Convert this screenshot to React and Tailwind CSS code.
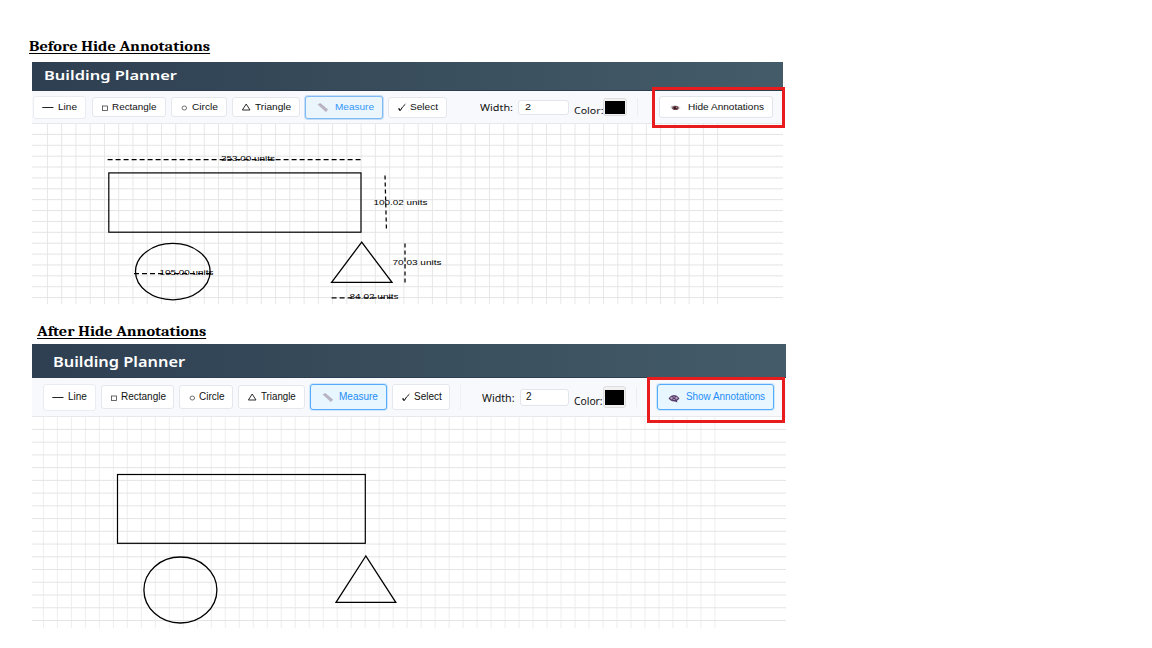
import React, { useLayoutEffect, useRef, useState } from "react";

const SANS = "font-['Liberation_Sans',sans-serif]";
const HUMANIST = "font-['Noto_Sans',sans-serif]";

// Single line of text stretched horizontally to a given width.
function FitText({ width, className = "", children }) {
  const ref = useRef(null);
  const [scale, setScale] = useState(1);
  useLayoutEffect(() => {
    setScale(width / ref.current.offsetWidth);
  }, [width]);
  return (
    <span className="inline-flex shrink-0 whitespace-nowrap" style={{ width }}>
      <span className="inline-flex origin-left" style={{ transform: `scaleX(${scale})` }}>
        <span ref={ref} className={className}>{children}</span>
      </span>
    </span>
  );
}

const LineIcon = () => (
  <svg className="h-3 w-3 shrink-0" viewBox="0 0 12 12"><path d="M0.3 6.5H11.5" stroke="#222" strokeWidth="1" /></svg>
);
const RectIcon = () => (
  <svg className="h-3 w-2 shrink-0" viewBox="0 0 8 12"><rect x="2.5" y="5" width="5" height="4.5" fill="none" stroke="#444" strokeWidth="0.8" /></svg>
);
const CircleIcon = () => (
  <svg className="h-3 w-2 shrink-0" viewBox="0 0 8 12"><ellipse cx="4.3" cy="7" rx="2.3" ry="2" fill="none" stroke="#444" strokeWidth="0.75" /></svg>
);
const TriangleIcon = () => (
  <svg className="h-3 w-2.5 shrink-0" viewBox="0 0 10 12"><path d="M1.4 9L5.2 3L9 9Z" fill="none" stroke="#222" strokeWidth="0.95" /></svg>
);
const RulerIcon = () => (
  <svg className="h-3 w-3 shrink-0" viewBox="0 0 12 12">
    <path d="M0.6 3.6L3.2 2L11.2 8.8L8.8 11Z" fill="#bbb5c4" />
    <path d="M3.3 3.9l0.8-0.8M5 5.3l0.8-0.8M6.7 6.8l0.8-0.8M8.4 8.3l0.8-0.8" stroke="#a097ab" strokeWidth="0.6" />
  </svg>
);
const CheckIcon = () => (
  <svg className="h-3 w-2.5 shrink-0" viewBox="0 0 10 12"><path d="M1.6 7.3L3.2 9.5" fill="none" stroke="#111" strokeWidth="1.4" /><path d="M3.2 9.7Q5.2 5.6 8.4 3.2" fill="none" stroke="#111" strokeWidth="1" /></svg>
);
const EyeIcon = () => (
  <svg className="h-3 w-3 shrink-0" viewBox="0 0 12 12">
    <path d="M0.8 7Q5.5 3.2 11.8 7.2Q6 10.4 0.8 7Z" fill="#d8cfd6" />
    <path d="M2 5.8Q6 3.6 10.3 6.2" fill="none" stroke="#9d929e" strokeWidth="0.8" />
    <ellipse cx="6.4" cy="7" rx="3.2" ry="2" fill="#6f4047" />
    <ellipse cx="6.2" cy="6.9" rx="1.5" ry="1.1" fill="#2b171c" />
    <circle cx="7.3" cy="6.4" r="0.5" fill="#cbb9bd" />
  </svg>
);
const EyeSpeechIcon = () => (
  <svg className="h-3 w-3 shrink-0" viewBox="0 0 12 12">
    <path d="M0.5 7.2Q6 0.8 11.5 7.2Q10.3 8.9 9 9.7L9.3 11.4L7.2 10.5Q3 10.8 0.5 7.2Z" fill="#553a68" />
    <path d="M2.2 7.2Q2.8 6.3 3.7 5.8Q3.3 7.3 4 8.6Q2.9 8.1 2.2 7.2ZM9.8 7.2Q9.2 6.3 8.3 5.8Q8.7 7.3 8 8.6Q9.1 8.1 9.8 7.2Z" fill="#e4dcec" />
    <circle cx="6" cy="7.2" r="1.5" fill="none" stroke="#b9aac6" strokeWidth="0.7" />
  </svg>
);

function Tool({ icon, label, width, className, text = "text-[#111]" }) {
  return (
    <div className={`flex shrink-0 items-center rounded-[3px] border ${className} ${text}`}>
      {icon}
      <FitText width={width} className={`${SANS} leading-3`}>{label}</FitText>
    </div>
  );
}

const range = (first, step, count) => Array.from({ length: count }, (_, i) => first + i * step);

function Grid({ w, h, xs, ys, vertical, horizontal }) {
  return (
    <g>
      {xs.map((x) => <path key={`v${x}`} d={`M${x} 0V${h}`} stroke={vertical} strokeWidth="1" />)}
      {ys.map((y) => <path key={`h${y}`} d={`M0 ${y}H${w}`} stroke={horizontal} strokeWidth="1" />)}
    </g>
  );
}

function Dimension({ d, x, y, width, label, dash = "5 3" }) {
  return (
    <g>
      <path d={d} fill="none" stroke="#000" strokeWidth="1.25" strokeDasharray={dash} />
      <text x={x} y={y} textLength={width} lengthAdjust="spacingAndGlyphs" className={`${SANS} text-[8px]`} fill="#000">{label}</text>
    </g>
  );
}

function BeforePanel() {
  return (
    <section className="relative ml-8 w-[751px]">
      <header className="flex h-[29px] items-center border-b border-[#2c3e50] bg-linear-to-r from-[#2e3f51] to-[#445c69] pl-3 text-white">
        <FitText width={133} className={`${HUMANIST} text-[12.5px] leading-4 font-semibold`}>Building Planner</FitText>
      </header>
      <div className="flex h-[33px] items-center border-b border-[#e6e8ec] bg-[#f8f9fc] text-[9px]">
        <Tool icon={<LineIcon />} label="Line" width={19} className="ml-px h-[23px] w-[53px] gap-1 border-[#e9ecf1] bg-white pl-2" />
        <Tool icon={<RectIcon />} label="Rectangle" width={45} className="ml-[6px] h-5 w-[74px] gap-1 border-[#e4e7ec] bg-white pl-[7px]" />
        <Tool icon={<CircleIcon />} label="Circle" width={26} className="ml-[5px] h-5 w-[56px] gap-1 border-[#e4e7ec] bg-white pl-2" />
        <Tool icon={<TriangleIcon />} label="Triangle" width={36} className="ml-[5px] h-5 w-[68px] gap-1 border-[#e4e7ec] bg-white pl-2" />
        <Tool icon={<RulerIcon />} label="Measure" width={39} text="text-[#3398fb]" className="ml-[5px] h-[23px] w-[78px] gap-[6px] border-[#7fbaf2] bg-[#ebf5fc] pl-[11px] shadow-[0_0_0_1px_#c5def7]" />
        <Tool icon={<CheckIcon />} label="Select" width={28} className="ml-[5px] h-[21px] w-[59px] gap-[3px] border-[#e4e7ec] bg-white pl-2" />
        <div className="ml-[33px] flex pt-[2px] text-[#111]">
          <FitText width={33} className={`${HUMANIST} text-[9.5px] leading-3`}>Width:</FitText>
        </div>
        <div className="ml-[5px] flex h-[15px] w-[51px] items-center rounded-[3px] border border-[#e2e5ea] bg-white pl-[6px] text-[#111]">
          <FitText width={6} className={`${SANS} leading-3`}>2</FitText>
        </div>
        <div className="ml-[5px] flex pt-[7px] text-[#111]">
          <FitText width={29} className={`${HUMANIST} text-[9.5px] leading-3`}>Color:</FitText>
        </div>
        <div className="flex h-[18px] w-6 items-center justify-center rounded-[3px] border border-[#dedede] bg-[#f1f1f1]">
          <div className="h-[13px] w-5 bg-black" />
        </div>
        <div className="ml-[10px] h-[18px] w-px bg-[#eceef2]" />
        <Tool icon={<EyeIcon />} label="Hide Annotations" width={76} className="ml-[21px] h-[22px] w-[114px] gap-[7px] border-[#e2e5ec] bg-white pl-[9px]" />
      </div>
      <svg className="block h-[180px] w-[751px]" viewBox="0 0 751 180">
        <Grid w={751} h={180} xs={range(15.4, 14.26, 48)} ys={range(10.4, 10.88, 16)} vertical="#e7e7e7" horizontal="#e4e4e4" />
        <g fill="none" stroke="#000">
          <rect x="76.8" y="48.9" width="252.2" height="59.3" strokeWidth="1.2" />
          <ellipse cx="140.8" cy="147.6" rx="37.3" ry="28.2" strokeWidth="1.3" />
          <path d="M329.7 118.2L299.6 158.3H360Z" strokeWidth="1.3" />
        </g>
        <Dimension d="M75.6 35.5H328.5" x={189} y={37} width={54} label="353.00 units" />
        <Dimension d="M353 51.5L354.5 107.5" x={341.5} y={80.6} width={54} label="100.02 units" dash="4 3" />
        <Dimension d="M102 149.5H180" x={127.5} y={151} width={54} label="105.00 units" />
        <Dimension d="M373 119.5V158.5" x={360.5} y={140.6} width={49} label="70.03 units" dash="4 3" />
        <Dimension d="M299.6 173.8H362" x={317.5} y={175.2} width={49} label="84.02 units" />
      </svg>
      <div className="absolute top-[25px] left-[620px] h-[41px] w-[133px] border-[3px] border-[#e81c1c]" />
    </section>
  );
}

function AfterPanel() {
  return (
    <section className="relative ml-8 w-[754px]">
      <header className="flex h-[34px] items-center border-b border-[#2c3e50] bg-linear-to-r from-[#2e3f51] to-[#445c69] pl-[21px] text-white">
        <FitText width={132} className={`${HUMANIST} text-[14.5px] leading-4 font-semibold`}>Building Planner</FitText>
      </header>
      <div className="flex h-[39px] items-center border-b border-[#e6e8ec] bg-[#f8f9fc] text-[10px]">
        <Tool icon={<LineIcon />} label="Line" width={19} className="ml-[11px] h-[27px] w-[53px] gap-1 border-[#e9ecf1] bg-white pl-2" />
        <Tool icon={<RectIcon />} label="Rectangle" width={45} className="ml-[5px] h-6 w-[73px] gap-1 border-[#e4e7ec] bg-white pl-[7px]" />
        <Tool icon={<CircleIcon />} label="Circle" width={26} className="ml-[5px] h-6 w-[54px] gap-[3px] border-[#e4e7ec] bg-white pl-2" />
        <Tool icon={<TriangleIcon />} label="Triangle" width={35} className="ml-[5px] h-6 w-[67px] gap-1 border-[#e4e7ec] bg-white pl-2" />
        <Tool icon={<RulerIcon />} label="Measure" width={39} text="text-[#258df5]" className="ml-[5px] h-[26px] w-[77px] gap-[5px] border-[#55aafa] bg-[#e7f6ff] pl-[11px] shadow-[0_0_0_1px_#d0e7fb]" />
        <Tool icon={<CheckIcon />} label="Select" width={28} className="ml-[5px] h-[26px] w-[58px] gap-[3px] border-[#e4e7ec] bg-white pl-2" />
        <div className="ml-[10px] h-[26px] w-px bg-[#eef0f4]" />
        <div className="ml-[21px] flex pt-0.5 text-[#111]">
          <FitText width={33} className={`${HUMANIST} text-[11px] leading-3`}>Width:</FitText>
        </div>
        <div className="ml-[5px] flex h-[17px] w-[49px] items-center rounded-[3px] border border-[#e2e5ea] bg-white pl-[5px] text-[#111]">
          <FitText width={6} className={`${SANS} leading-3`}>2</FitText>
        </div>
        <div className="ml-[5px] flex pt-2 text-[#111]">
          <FitText width={29} className={`${HUMANIST} text-[11px] leading-3`}>Color:</FitText>
        </div>
        <div className="flex h-[22px] w-[23px] items-center justify-center rounded-[3px] border border-[#dedede] bg-[#f1f1f1]">
          <div className="h-[15px] w-[19px] bg-black" />
        </div>
        <div className="ml-[10px] h-5 w-px bg-[#eceef2]" />
        <Tool icon={<EyeSpeechIcon />} label="Show Annotations" width={79} text="text-[#258df5]" className="ml-5 h-[26px] w-[117px] gap-[6px] border-[#55aafa] bg-[#e7f6ff] pl-[10px] shadow-[0_0_0_1px_#d0e7fb]" />
      </div>
      <svg className="block h-[211px] w-[754px]" viewBox="0 0 754 211">
        <Grid w={754} h={211} xs={range(11.4, 13.99, 49)} ys={range(12.4, 12.74, 16)} vertical="#eeeeee" horizontal="#e4e4e4" />
        <g fill="none" stroke="#000">
          <rect x="85.5" y="57.5" width="247.8" height="68.8" strokeWidth="1.2" />
          <ellipse cx="148.4" cy="173" rx="36.5" ry="33" strokeWidth="1.3" />
          <path d="M333.8 139L304 185.4H363.8Z" strokeWidth="1.3" />
        </g>
      </svg>
      <div className="absolute top-[33px] left-[615px] h-[46px] w-[138px] border-[3px] border-[#e81c1c]" />
    </section>
  );
}

const HEADING = "font-[Cambria,Caladea,'DejaVu_Serif_Condensed','DejaVu_Serif',serif] text-[13.5px] leading-4 font-bold underline underline-offset-2";

export default function App() {
  return (
    <main className="flex h-[648px] w-[1152px] flex-col overflow-hidden bg-white text-black">
      <h2 className="flex h-[62px] pt-[39px] pl-[29px]">
        <FitText width={181} className={HEADING}>Before Hide Annotations</FitText>
      </h2>
      <BeforePanel />
      <h2 className="flex h-10 pt-5 pl-[37px]">
        <FitText width={169} className={HEADING}>After Hide Annotations</FitText>
      </h2>
      <AfterPanel />
    </main>
  );
}
